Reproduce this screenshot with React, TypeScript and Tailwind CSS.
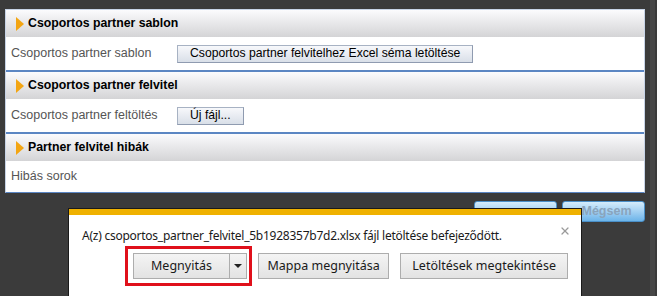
import { X } from "lucide-react";

const sans = "font-['Liberation_Sans',Arial,sans-serif]";

function SectionHeader({ title }: { title: string }) {
  return (
    <div className="flex h-[27px] items-center bg-gradient-to-b from-[#fbfbfd] to-[#d4d4d6] pl-[10px]">
      <span className="mr-[4px] h-0 w-0 border-y-[7px] border-l-[8px] border-y-transparent border-l-[#f3a512]" />
      <span className="text-[12.3px] font-bold text-black">{title}</span>
    </div>
  );
}

function PanelButton({ children }: { children: React.ReactNode }) {
  return (
    <button className="h-[18px] border border-[#a7b2c3] border-b-[#8f9bb0] border-r-[#8f9bb0] bg-gradient-to-b from-[#f7f8fb] to-[#d9dfe8] px-[12px] text-[12.2px] leading-none text-black">
      {children}
    </button>
  );
}

function DialogButton({ children, className = "" }: { children: React.ReactNode; className?: string }) {
  return (
    <button
      className={
        "flex h-[26px] items-center justify-center border border-[#adadad] bg-gradient-to-b from-[#f4f4f4] to-[#e3e3e3] text-[12.5px] text-[#1a1a1a] " +
        className
      }
    >
      {children}
    </button>
  );
}

export default function App() {
  return (
    <div className={`relative h-[296px] w-[657px] overflow-hidden bg-[#3b3b3b] ${sans}`}>
      {/* right strip */}
      <div className="absolute right-[2px] top-0 h-full w-[5px] bg-[#474747]" />

      <div className="pl-[5px] pt-[9px]">
        {/* Panel */}
        <div className="w-[640px] border border-[#c7d3e6] border-b-[#5b86c3] bg-white">
          <SectionHeader title="Csoportos partner sablon" />
          <div className="flex h-[35px] items-center border-b-2 border-[#5b86c3] pl-[5px] text-[12.5px] text-[#555]">
            <span className="w-[166px]">Csoportos partner sablon</span>
            <PanelButton>Csoportos partner felvitelhez Excel séma letöltése</PanelButton>
          </div>

          <SectionHeader title="Csoportos partner felvitel" />
          <div className="flex h-[35px] items-center border-b-2 border-[#5b86c3] pl-[5px] text-[12.5px] text-[#555]">
            <span className="w-[166px]">Csoportos partner feltöltés</span>
            <PanelButton>Új fájl...</PanelButton>
          </div>

          <SectionHeader title="Partner felvitel hibák" />
          <div className="flex h-[31px] items-center pl-[5px] text-[12.5px] text-[#555]">
            <span>Hibás sorok</span>
          </div>
        </div>

        {/* Footer buttons */}
        <div className="mt-[8px] flex w-[640px] justify-end gap-[5px]">
          <button className="h-[21px] w-[83px] rounded-[3px] border border-[#4a8fc8] bg-gradient-to-b from-[#d5ecfb] to-[#6cb4e9]" />
          <button className="h-[21px] w-[83px] rounded-[3px] border border-[#4a8fc8] bg-gradient-to-b from-[#d5ecfb] to-[#6cb4e9] pl-[6px] text-[12.5px] font-bold text-[#8aa4bc]">
            Mégsem
          </button>
        </div>
      </div>

      {/* Download notification */}
      <div className="absolute left-[68px] top-[208px] h-[100px] w-[514px] border border-[#1a1a1a] bg-white font-['Noto_Sans','Open_Sans',sans-serif]">
        <div className="h-[6px] bg-[#efb100]" />
        <div className="relative px-[13px] pt-[13px]">
          <p className="text-[12px] leading-[16px] tracking-[-0.25px] text-[#1a1a1a]">
            A(z) csoportos_partner_felvitel_5b1928357b7d2.xlsx fájl letöltése befejeződött.
          </p>
          <X className="absolute right-[10px] top-[10px] h-[12px] w-[12px] text-[#9a9a9a]" strokeWidth={2.5} />
          <div className="mt-[9px] flex items-center">
            <div className="relative ml-[51px] flex">
              <div className="absolute -left-[8px] -top-[7px] h-[40px] w-[127px] border-[3px] border-[#e0101b]" />
              <DialogButton className="w-[97px]">Megnyitás</DialogButton>
              <DialogButton className="-ml-px w-[18px]">
                <span className="h-0 w-0 border-x-[4px] border-t-[4px] border-x-transparent border-t-[#222]" />
              </DialogButton>
            </div>
            <DialogButton className="ml-[11px] w-[133px]">Mappa megnyitása</DialogButton>
            <DialogButton className="ml-[11px] w-[170px]">Letöltések megtekintése</DialogButton>
          </div>
        </div>
      </div>
    </div>
  );
}
